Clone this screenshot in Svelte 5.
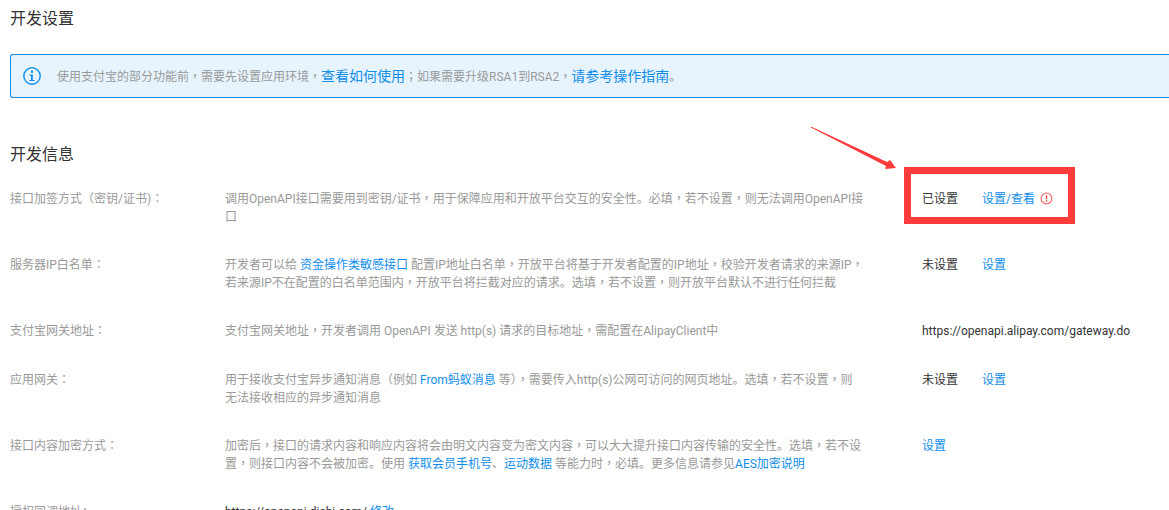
<script>
  const rows = [
    { label: '接口加签方式（密钥/证书)：', lines: [[['调用OpenAPI接口需要用到密钥/证书，用于保障应用和开放平台交互的安全性。必填，若不设置，则无法调用OpenAPI接']], [['口']]], status: '已设置', link: '设置/查看', warn: true, h: 66 },
    { label: '服务器IP白名单：', lines: [[['开发者可以给 '], ['资金操作类敏感接口', 1], [' 配置IP地址白名单，开放平台将基于开发者配置的IP地址，校验开发者请求的来源IP，']], [['若来源IP不在配置的白名单范围内，开放平台将拦截对应的请求。选填，若不设置，则开放平台默认不进行任何拦截']]], status: '未设置', link: '设置', h: 66 },
    { label: '支付宝网关地址：', lines: [[['支付宝网关地址，开发者调用 OpenAPI 发送 http(s) 请求的目标地址，需配置在AlipayClient中']]], value: 'https://openapi.alipay.com/gateway.do', h: 49 },
    { label: '应用网关：', lines: [[['用于接收支付宝异步通知消息（例如 '], ['From蚂蚁消息', 1], [' 等），需要传入http(s)公网可访问的网页地址。选填，若不设置，则']], [['无法接收相应的异步通知消息']]], status: '未设置', link: '设置', h: 66 },
    { label: '接口内容加密方式：', lines: [[['加密后，接口的请求内容和响应内容将会由明文内容变为密文内容，可以大大提升接口内容传输的安全性。选填，若不设']], [['置，则接口内容不会被加密。使用 '], ['获取会员手机号', 1], ['、'], ['运动数据', 1], [' 等能力时，必填。更多信息请参见'], ['AES加密说明', 1]]], link: '设置', h: 66 },
  ];
  const punct = /([，：；（）])/;
</script>

{#snippet txt(s)}{#each s.split(punct) as part}{#if punct.test(part)}<span class="p">{part}</span>{:else}{part}{/if}{/each}{/snippet}

<div class="page">
  <h2 class="first">开发设置</h2>
  <div class="alert">
    <svg class="info" width="20" height="20" viewBox="0 0 20 20" aria-hidden="true">
      <circle cx="10" cy="10" r="8.2" fill="none" stroke="#108ee9" stroke-width="1.4"/>
      <rect x="8.9" y="4.6" width="2.2" height="2.2" fill="#108ee9"/>
      <path d="M7.6 8.5h3.2v5.4h1.6v1.2H7.4v-1.2h1.6V9.7H7.6z" fill="#108ee9"/>
    </svg>
    <p>{@render txt('使用支付宝的部分功能前，需要先设置应用环境，')}<a href="#a" class="big">查看如何使用</a>{@render txt('；如果需要升级RSA1到RSA2，')}<a href="#a" class="big">请参考操作指南</a>。</p>
  </div>
  <h2 class="second">开发信息</h2>

  <div class="list">
    {#each rows as r}
      <div class="row" style="height:{r.h}px">
        <div class="label">{@render txt(r.label)}</div>
        <div class="desc">
          {#each r.lines as line}
            <div class="line">{#each line as s}{#if s[1]}<a href="#a">{s[0]}</a>{:else}{@render txt(s[0])}{/if}{/each}</div>
          {/each}
        </div>
        <div class="side">
          {#if r.value}
            <span class="dark">{r.value}</span>
          {:else if r.status}
            <span class="dark status">{r.status}</span>
            <a href="#a">{r.link}</a>
            {#if r.warn}
              <svg class="warn" width="13" height="13" viewBox="0 0 13 13" aria-hidden="true">
                <circle cx="6.5" cy="6.5" r="5.4" fill="none" stroke="#f4777b" stroke-width="1.3"/>
                <rect x="5.8" y="3.2" width="1.4" height="4" fill="#f04134"/>
                <rect x="5.8" y="8.2" width="1.4" height="1.4" fill="#f04134"/>
              </svg>
            {/if}
          {:else}
            <a href="#a">{r.link}</a>
          {/if}
        </div>
      </div>
    {/each}
    <div class="row">
      <div class="label">授权回调地址：</div>
      <div class="desc"><span class="dark">https://openapi.dishi.com/</span> <a href="#a">修改</a></div>
    </div>
  </div>

  <div class="mark" aria-hidden="true"></div>
  <svg class="arrow" width="100" height="60" viewBox="0 0 100 60" aria-hidden="true">
    <path d="M0 0 L2 0 L77 35 L80 33 L86 41 L75 42 L76 39 Z" fill="#ff3b3b"/>
  </svg>
</div>

<style>
  :global(body) {
    margin: 0;
    background: #fff;
  }
  .page {
    position: relative;
    height: 510px;
    overflow: hidden;
    padding-left: 10px;
    font-family: Roboto, "Noto Sans CJK SC", sans-serif;
    font-size: 12px;
    line-height: 18px;
    color: #999;
    box-sizing: border-box;
  }
  .p { font-family: "Noto Sans CJK TC", sans-serif; line-height: 1; }
  .line { height: 18px; }
  h2 {
    margin: 0;
    font-size: 16px;
    line-height: 20px;
    font-weight: 400;
    color: #333;
  }
  .first { padding-top: 9px; }
  .second { margin-top: 47px; }
  .alert {
    display: flex;
    align-items: center;
    margin-top: 25px;
    margin-right: -10px;
    height: 44px;
    box-sizing: border-box;
    border: 1px solid #108ee9;
    border-right: 0;
    border-radius: 3px 0 0 3px;
    background: #e7f4fd;
    padding-left: 11px;
  }
  .alert p { margin: 0 0 0 15px; }
  .big { font-size: 14px; }
  a { color: #108ee9; text-decoration: none; }
  .list { margin-top: 25px; }
  .row {
    display: grid;
    grid-template-columns: 215px 640px 1fr;
  }
  .desc { white-space: nowrap; }
  .side {
    display: flex;
    align-items: flex-start;
    padding-left: 57px;
    white-space: nowrap;
  }
  .dark { color: #333; }
  .status { width: 60px; flex: none; }
  .warn { margin: 2px 0 0 5px; }
  .mark {
    position: absolute;
    left: 904px;
    top: 167px;
    width: 171px;
    height: 57px;
    box-sizing: border-box;
    border: 7px solid #ff3b3b;
  }
  .arrow {
    position: absolute;
    left: 810px;
    top: 127px;
  }
</style>
